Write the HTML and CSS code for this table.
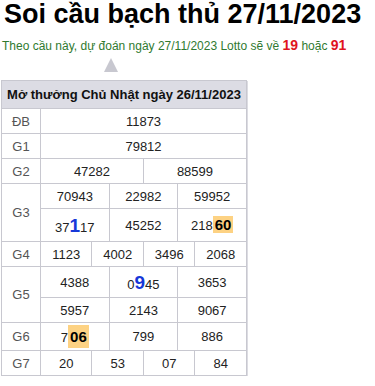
FILE: index.html
```html
<!DOCTYPE html>
<html lang="vi">
<head>
<meta charset="utf-8">
<link rel="stylesheet" href="styles.css">
</head>
<body>
<div class="page">
  <h1 class="title">Soi cầu bạch thủ 27/11/2023</h1>
  <p class="predict">Theo cầu này, dự đoán ngày 27/11/2023 Lotto sẽ về <b class="hot">19</b> hoặc <b class="hot">91</b></p>
  <div class="arrow"></div>
  <table class="kq">
    <colgroup>
      <col class="c-label">
      <col><col><col><col><col><col><col><col><col><col><col><col>
    </colgroup>
    <thead>
      <tr><th colspan="13">Mở thưởng Chủ Nhật ngày 26/11/2023</th></tr>
    </thead>
    <tbody>
      <tr><td class="lbl">ĐB</td><td colspan="12">11873</td></tr>
      <tr><td class="lbl">G1</td><td colspan="12">79812</td></tr>
      <tr><td class="lbl">G2</td><td colspan="6">47282</td><td colspan="6">88599</td></tr>
      <tr><td class="lbl" rowspan="2">G3</td><td colspan="4">70943</td><td colspan="4">22982</td><td colspan="4">59952</td></tr>
      <tr class="r-g3b"><td colspan="4">37<b class="big">1</b>17</td><td colspan="4">45252</td><td colspan="4">218<b class="hl">60</b></td></tr>
      <tr><td class="lbl">G4</td><td colspan="3">1123</td><td colspan="3">4002</td><td colspan="3">3496</td><td colspan="3">2068</td></tr>
      <tr class="r-g5a"><td class="lbl" rowspan="2">G5</td><td colspan="4">4388</td><td colspan="4">0<b class="big">9</b>45</td><td colspan="4">3653</td></tr>
      <tr><td colspan="4">5957</td><td colspan="4">2143</td><td colspan="4">9067</td></tr>
      <tr class="r-g6"><td class="lbl">G6</td><td colspan="4">7<b class="hl hl-lg">06</b></td><td colspan="4">799</td><td colspan="4">886</td></tr>
      <tr><td class="lbl">G7</td><td colspan="3">20</td><td colspan="3">53</td><td colspan="3">07</td><td colspan="3">84</td></tr>
    </tbody>
  </table>
</div>
</body>
</html>
```
FILE: styles.css
```css
html, body {
  margin: 0;
  padding: 0;
  background: #fff;
}
body {
  font-family: "Liberation Sans", Arial, sans-serif;
  color: #222;
}
.page {
  padding-left: 1px;
}
.title {
  margin: 0;
  padding-left: 3px;
  font-size: 27px;
  line-height: 29px;
  font-weight: bold;
  color: #000;
}
.predict {
  margin: 8px 0 0 1px;
  font-size: 12px;
  line-height: 16px;
  color: #2f7a2f;
}
.hot {
  color: #e0141e;
  font-size: 14px;
  line-height: 16px;
}
.arrow {
  width: 0;
  height: 0;
  margin: 4px 0 0 103px;
  border-left: 7px solid transparent;
  border-right: 7px solid transparent;
  border-bottom: 14px solid #c8c8d0;
}
.kq {
  margin-top: 8px;
  width: 246px;
  table-layout: fixed;
  border-collapse: collapse;
  font-size: 13px;
  box-shadow: 1px 1px 0 #dcdce2;
}
.c-label {
  width: 39px;
}
.kq th,
.kq td {
  border: 1px solid #c8c8d0;
  text-align: center;
  padding: 0;
  height: 24px;
  line-height: 15px;
  white-space: nowrap;
}
.kq th {
  background: #dcdce4;
  font-weight: bold;
  color: #111;
  height: 27px;
}
.lbl {
  color: #555;
}
.r-g3b td { height: 32px; }
.r-g5a td { height: 30px; }
.r-g6 td { height: 27px; }
.big {
  color: #1638d8;
  font-size: 19px;
  line-height: 19px;
}
.hl {
  background: #fdd283;
  color: #000;
  font-size: 15px;
  padding: 0 2px;
}
.hl-lg {
  padding: 3px 2px;
}
```
